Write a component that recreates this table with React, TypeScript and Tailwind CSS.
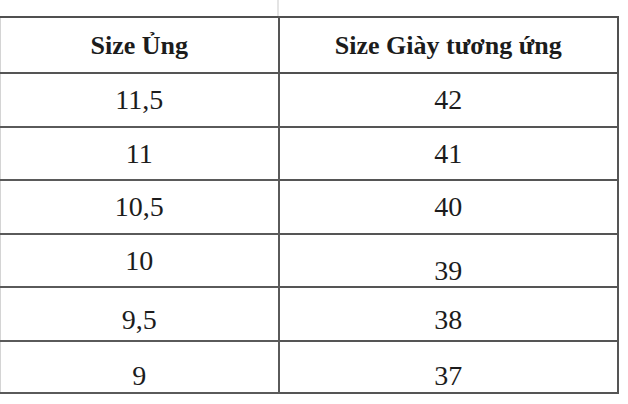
import React from 'react';

type Row = { boot: string; shoe: string; h: string; bootPad?: string; shoePad?: string };

const rows: Row[] = [
  { boot: '11,5', shoe: '42', h: 'h-[54px]' },
  { boot: '11', shoe: '41', h: 'h-[53px]' },
  { boot: '10,5', shoe: '40', h: 'h-[54px]' },
  { boot: '10', shoe: '39', h: 'h-[53px]', shoePad: 'pt-[20px]' },
  { boot: '9,5', shoe: '38', h: 'h-[54px]', bootPad: 'pt-[12px]', shoePad: 'pt-[12px]' },
  { boot: '9', shoe: '37', h: 'h-[52px]', bootPad: 'pt-[18px]', shoePad: 'pt-[18px]' },
];

const App: React.FC = () => {
  return (
    <div
      className="w-[628px] h-[404px] bg-white overflow-hidden text-[#1c1c1c]"
      style={{ fontFamily: '"Liberation Serif", "Times New Roman", serif' }}
    >
      {/* faint tail of the table above */}
      <div className="flex h-[16px]">
        <div className="w-[277px]" />
        <div className="w-[2px] bg-[#e4e4e4]" />
      </div>

      <table className="w-[619px] table-fixed border-collapse">
        <colgroup>
          <col className="w-[278px]" />
          <col />
        </colgroup>
        <thead>
          <tr className="h-[56px]">
            <th className="border-t-2 border-b-2 border-r-2 border-l border-t-[#505050] border-b-[#555] border-r-[#555] border-l-[#d4d4d4] p-0 align-middle text-[26px] font-bold">
              Size Ủng
            </th>
            <th className="border-t-2 border-b-2 border-r-2 border-[#505050] p-0 align-middle text-[26px] font-bold">
              Size Giày tương ứng
            </th>
          </tr>
        </thead>
        <tbody>
          {rows.map((r) => (
            <tr key={r.boot} className={r.h}>
              <td className={`border-b-2 border-r-2 border-l border-b-[#5a5a5a] border-r-[#5a5a5a] border-l-[#d4d4d4] p-0 text-center align-middle text-[28px] leading-none ${r.bootPad ?? ''}`}>
                {r.boot}
              </td>
              <td className={`border-b-2 border-r-2 border-[#555] p-0 text-center align-middle text-[28px] leading-none ${r.shoePad ?? ''}`}>
                {r.shoe}
              </td>
            </tr>
          ))}
        </tbody>
      </table>
    </div>
  );
};

export default App;
